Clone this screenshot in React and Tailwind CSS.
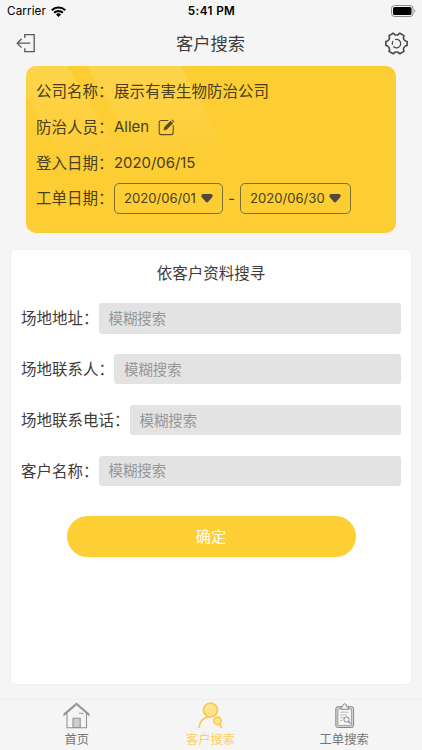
import React from "react";

const ink = "#4a4542";

function StatusBar() {
  return (
    <div className="grid h-[22px] grid-cols-[1fr_auto_1fr] items-center pl-[7px] pr-[6px] pt-[1px] text-[11.7px] text-black">
      <div className="flex items-center gap-[5px]">
        <span className="tracking-[0.1px]">Carrier</span>
        <svg width="15" height="11" viewBox="0 0 15 11" fill="none" stroke="#000" strokeWidth="2.2">
          <path d="M0.8 4.2a9.6 9.6 0 0 1 13.4 0" />
          <path d="M3.2 6.8a6.1 6.1 0 0 1 8.6 0" />
          <path d="M7.5 10.9 5 8.4a3.6 3.6 0 0 1 5 0z" fill="#000" stroke="none" />
        </svg>
      </div>
      <span className="font-semibold tracking-[0.4px]">5:41 PM</span>
      <svg className="-mt-[1px] justify-self-end" width="25" height="12" viewBox="0 0 25 12">
        <rect x="0.5" y="0.5" width="21.5" height="11" rx="3" fill="none" stroke="#8a8a8a" />
        <rect x="2" y="2" width="18.5" height="8" rx="1.6" fill="#000" />
        <path d="M23.4 4.2v3.6c1.3-.6 1.3-3 0-3.6z" fill="#8a8a8a" />
      </svg>
    </div>
  );
}

function Header() {
  return (
    <header className="flex h-[44px] items-center justify-between pl-[16px] pr-[14px]">
      <svg className="-mt-[2px]" width="20" height="20" viewBox="0 0 20 20" fill="none" stroke="#5c5755" strokeWidth="1.3">
        <path d="M8.8 5V1.7h9.4v17H8.8v-3.4M14.2 10.2H1.2M5.6 5.8 1.2 10.2l4.4 4.4" />
      </svg>
      <h1 className="text-[17.3px] font-normal leading-none text-[#403c3a]">客户搜索</h1>
      <svg className="-mt-[2px]" width="23" height="23" viewBox="0 0 23 23" fill="none" stroke={ink} strokeWidth="1.6" strokeLinecap="round" strokeLinejoin="round">
        <path d="M8.2 1.2 9.8 2.7Q11.5 3.4 13.2 2.7L14.8 1.2 19 3.6 18.4 5.9Q18.6 8 20.3 8.9L22.1 9.4V13.6L20.3 14.1Q18.6 15 18.4 17.1L19 19.4 14.8 21.8 13.2 20.3Q11.5 19.6 9.8 20.3L8.2 21.8 4 19.4 4.6 17.1Q4.4 15 2.7 14.1L.9 13.6V9.4L2.7 8.9Q4.4 8 4.6 5.9L4 3.6z" />
        <path d="M10.4 7.5a4.2 4.2 0 1 1-1.7 7.2M7.3 12.3a4.2 4.2 0 0 1 .6-3" strokeWidth="1.2" />
      </svg>
    </header>
  );
}

function DateBox({ value, className }) {
  return (
    <button className={`flex h-[31px] items-center justify-between rounded-[5px] border border-[#81702f] pl-[9px] pr-[9px] text-[13.1px] ${className}`}>
      <span className="pt-[1px]">{value}</span>
      <svg width="12" height="9" viewBox="0 0 12 9" fill="#554741">
        <path d="M1.8 0h8.4q2.6 1.3.8 3.5L7.3 7.8q-1.3 1.4-2.6 0L1 3.5Q-.8 1.3 1.8 0z" />
      </svg>
    </button>
  );
}

function InfoRow({ label, children }) {
  return (
    <div className="flex h-[35.7px] items-center whitespace-nowrap">
      <span className="w-[78px] shrink-0">{label}：</span>
      {children}
    </div>
  );
}

function InfoCard() {
  return (
    <section className="mx-[26px] grid h-[167px] overflow-hidden rounded-[10px] bg-[#fdcd34] text-[15.5px] text-[#4a401f]">
      <svg className="col-start-1 row-start-1" width="370" height="167" viewBox="0 0 370 167">
        <defs>
          <linearGradient id="shine" x1="0" y1="0" x2="0" y2="1">
            <stop offset="0" stopColor="#ffdb62" stopOpacity=".5" />
            <stop offset="1" stopColor="#ffdb62" stopOpacity="0" />
          </linearGradient>
        </defs>
        <path d="M0 0h41l61 100H40L0 30z" fill="url(#shine)" />
        <path d="M61 0h94l43 80-20 15h-62z" fill="url(#shine)" />
      </svg>
      <div className="col-start-1 row-start-1 pl-[10px] pt-[8px]">
        <InfoRow label="公司名称">展示有害生物防治公司</InfoRow>
        <InfoRow label="防治人员">
          <span className="text-[15px]">Allen</span>
          <svg className="ml-[9px]" width="17" height="17" viewBox="0 0 17 17" fill="none" stroke="#5c4c2b" strokeWidth="1.1">
            <path d="M10.3 1.5H3.2Q1.2 1.5 1.2 3.5v10.1q0 2 2 2h10q2 0 2-2V6.2" />
            <path d="m5.5 11.6.8-3.5 6.3-6.3 2.5 2.5-6.3 6.3zM13.4 1.1l.8-.7 2.4 2.4-.8.8z" fill="#5c4c2b" stroke="none" />
          </svg>
        </InfoRow>
        <InfoRow label="登入日期"><span className="text-[14.9px]">2020/06/15</span></InfoRow>
        <div className="-mt-[0.6px]">
          <InfoRow label="工单日期">
            <DateBox value="2020/06/01" className="w-[109px]" />
            <span className="w-[17px] text-center">-</span>
            <DateBox value="2020/06/30" className="w-[111px]" />
          </InfoRow>
        </div>
      </div>
    </section>
  );
}

function Field({ label }) {
  return (
    <label className="flex h-[30.5px] items-center whitespace-nowrap text-[15.5px] text-[#3f3b39]">
      <span className="shrink-0 pt-[1px]">{label}：</span>
      <input
        placeholder="模糊搜索"
        className="h-full min-w-0 flex-1 rounded-[3px] bg-[#e3e3e3] px-[10px] text-[14.4px] placeholder:text-[#979797] focus:outline-none"
      />
    </label>
  );
}

function SearchPanel() {
  return (
    <section className="mx-[10px] mt-[15.5px] flex h-[436px] flex-col rounded-[6px] border border-[#f4efea] bg-white px-[10px] pt-[14.5px]">
      <h2 className="h-[20px] text-center text-[15.5px] leading-[20px] text-[#3f3b39]">依客户资料搜寻</h2>
      <div className="mt-[19px] flex flex-col gap-[20.4px]">
        <Field label="场地地址" />
        <Field label="场地联系人" />
        <Field label="场地联系电话" />
        <Field label="客户名称" />
      </div>
      <button className="mx-[45.5px] mt-[30px] h-[41px] rounded-full bg-[#fecf34] pt-[2px] text-[15.2px] text-white">确定</button>
    </section>
  );
}

function HomeIcon() {
  return (
    <svg width="27" height="27" viewBox="0 0 27 27" fill="none" stroke="#949494" strokeWidth="1.1">
      <path d="M1 12 13.5 1.2 26 12v1.2L13.5 2.7 1 13.2zM4 11v14.8h19.5V11" />
      <path d="M10 25.5v-9.3h7.2v9.3z" fill="#cecece" />
      <path d="M16 11.3h4.5" strokeWidth="1" />
    </svg>
  );
}

function CustomerIcon() {
  return (
    <svg width="27" height="27" viewBox="0 0 27 27" fill="#ffe391" stroke="#facb4b" strokeWidth="1.7">
      <path d="M2 26C2.4 19.6 6.3 15 12.5 15" fill="none" />
      <circle cx="13.5" cy="8" r="7" />
      <circle cx="20.5" cy="18.9" r="3.7" />
      <path d="m22.5 22.2 2.4 3.8" fill="none" />
    </svg>
  );
}

function OrderIcon() {
  return (
    <svg width="27" height="27" viewBox="0 0 27 27" fill="none" stroke="#888" strokeWidth="1">
      <rect x="4.8" y="4.7" width="17.8" height="20.8" rx="2" fill="#d2d2d2" />
      <path d="M7 7h13.4v16.4H7z" fill="#f8f8f8" strokeWidth=".7" />
      <path d="M10 7.2V4.8h1.5q.3-3 2.2-3t2.2 3h1.5v2.4z" fill="#f6f6f6" />
      <path d="M9.2 10.2h8.4M9.2 13h7M9.2 15.8h4M9.2 18.6h2.5" stroke="#aaa" strokeWidth=".8" />
      <circle cx="15.5" cy="17.5" r="2.6" />
      <path d="m17.5 19.5 2 2.1" strokeWidth="1.4" />
    </svg>
  );
}

function Tab({ icon, label, active }) {
  return (
    <button className={`flex flex-col items-center text-[12.3px] leading-[18px] ${active ? "text-[#fbd05a]" : "text-[#757575]"}`}>
      {icon}
      <span className="mt-[2px]">{label}</span>
    </button>
  );
}

export default function App() {
  return (
    <div lang="zh-CN" className="flex h-[750px] w-[422px] flex-col overflow-hidden bg-[#f5f5f5] font-[Inter,'Noto_Sans_CJK_SC',sans-serif]">
      <StatusBar />
      <Header />
      <InfoCard />
      <SearchPanel />
      <nav className="mt-auto grid h-[51px] grid-cols-3 border-t border-[#eeeeee] pl-[10px] pr-[11px] pt-[2px]">
        <Tab icon={<HomeIcon />} label="首页" />
        <Tab icon={<CustomerIcon />} label="客户搜索" active />
        <Tab icon={<OrderIcon />} label="工单搜索" />
      </nav>
    </div>
  );
}
